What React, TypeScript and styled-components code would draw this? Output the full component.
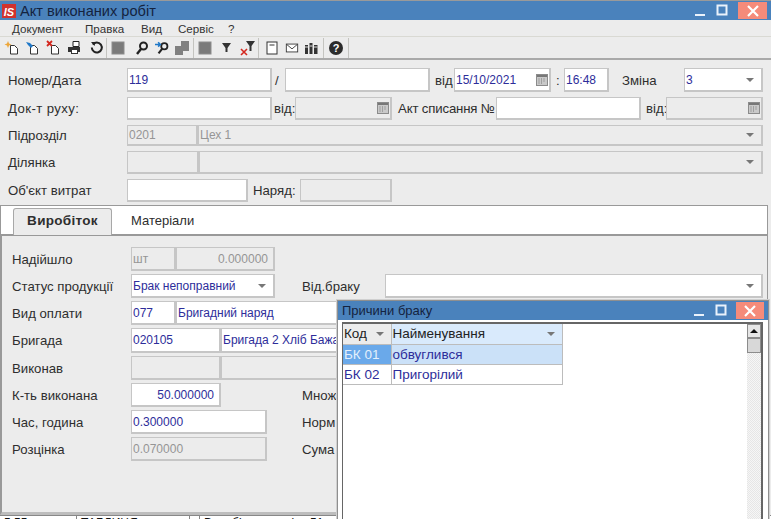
import React from "react";
import styled, { createGlobalStyle } from "styled-components";

const Global = createGlobalStyle`
  html, body { margin: 0; padding: 0; width: 771px; height: 519px; overflow: hidden; background: #ececec; }
  #root { width: 771px; height: 519px; overflow: hidden; }
  * { box-sizing: border-box; }
`;

const Page = styled.div`
  position: relative;
  width: 771px;
  height: 519px;
  overflow: hidden;
  background: #ececec;
  color: #2e2e2e;
  font: 13.2px "Liberation Sans", Arial, sans-serif;
  border-top: 1px solid #9a9a9a;
`;
const TitleBar = styled.div<{ $size: number }>`
  height: 19px;
  background: #4a82bc;
  display: flex;
  align-items: center;
  padding-left: 1px;
  color: #14233f;
  font-size: ${(p) => p.$size}px;
  gap: 3px;
`;
const WinButtons = styled.div`
  margin-left: auto;
  display: flex;
  align-items: flex-start;
  align-self: flex-start;
  height: 17px;
  padding-right: 4px;
`;
const WinBtn = styled.div<{ $w: number }>`
  width: ${(p) => p.$w}px;
  height: 17px;
  display: flex;
  align-items: center;
  justify-content: center;
`;
const CloseBtn = styled(WinBtn)`
  background: #f58b7a;
  margin-top: 1px;
  margin-left: 5px;
`;
const MenuBar = styled.div`
  height: 17px;
  display: flex;
  align-items: center;
  padding-left: 12px;
  border-bottom: 1px solid #d9d9d3;
  font-size: 11.6px;
  color: #333;
`;
const MenuItem = styled.span<{ $w: number }>`
  width: ${(p) => p.$w}px;
  flex: none;
`;
const Toolbar = styled.div`
  height: 23px;
  display: flex;
  align-items: center;
  padding-left: 2px;
  border-bottom: 2px solid #a9a9a9;
`;
const Tool = styled.div<{ $w: number }>`
  width: ${(p) => p.$w}px;
  height: 20px;
  flex: none;
  display: flex;
  align-items: center;
  justify-content: center;
`;
const Sep = styled.div`
  width: 1px;
  height: 20px;
  flex: none;
  background: #c4c4c0;
`;

const Form = styled.div`
  padding: 8px 8px 0 8px;
  display: flex;
  flex-direction: column;
  gap: 5px;
`;
const Row = styled.div<{ $h?: number }>`
  height: ${(p) => p.$h ?? 23}px;
  display: flex;
  align-items: stretch;
`;
const Label = styled.div<{ $w: number; $pl?: number; $ls?: number }>`
  width: ${(p) => p.$w}px;
  flex: none;
  display: flex;
  align-items: center;
  padding-left: ${(p) => p.$pl ?? 0}px;
  letter-spacing: ${(p) => p.$ls ?? 0}px;
  white-space: nowrap;
`;
const Field = styled.div<{ $w: number; $off?: boolean; $right?: boolean }>`
  width: ${(p) => p.$w}px;
  flex: none;
  display: flex;
  align-items: center;
  justify-content: ${(p) => (p.$right ? "flex-end" : "space-between")};
  padding: 0 ${(p) => (p.$right ? 5 : 1)}px 0 1px;
  border: 1px solid #c6c6c6;
  border-width: 1px 2px 2px 1px;
  background: ${(p) => (p.$off ? "#ececec" : "#fff")};
  color: ${(p) => (p.$off ? "#959595" : "#2d2d9a")};
  white-space: nowrap;
  overflow: hidden;
  font-size: 12px;
`;
const Arrow = styled.i`
  width: 0;
  height: 0;
  margin-right: 6px;
  flex: none;
  border-left: 4px solid transparent;
  border-right: 4px solid transparent;
  border-top: 4px solid #777;
`;

const TabStrip = styled.div`
  height: 31px;
  margin-top: 3px;
  margin-right: 3px;
  background: #fff;
  border: 1px solid #999;
  border-width: 1px 1px 2px 1px;
  display: flex;
  align-items: flex-end;
  padding-left: 12px;
`;
const ActiveTab = styled.div`
  width: 99px;
  height: 27px;
  margin-bottom: -1px;
  padding-bottom: 3px;
  background: #ececec;
  border: 1px solid #a8a8a8;
  border-bottom: none;
  border-radius: 3px 3px 0 0;
  display: flex;
  align-items: center;
  justify-content: center;
  font-weight: bold;
  font-size: 13.5px;
  letter-spacing: 0.3px;
`;
const Tab = styled.div`
  padding: 0 0 0 19px;
  height: 27px;
  display: flex;
  align-items: center;
  font-size: 13px;
`;
const TabBody = styled.div`
  height: 279px;
  margin-right: 3px;
  border: 1px solid #999;
  border-width: 0 1px 3px 2px;
  border-bottom-color: #bdbdbd;
  padding: 11px 0 0 10px;
  display: flex;
  flex-direction: column;
  gap: 3px;
`;
const StatusBar = styled.div`
  height: 14px;
  display: flex;
  background: #fff;
  color: #111;
  font-size: 12px;
  line-height: 14px;
  border-top: 1px solid #888;
  overflow: hidden;
`;
const StatusCell = styled.div<{ $w: number }>`
  width: ${(p) => p.$w}px;
  flex: none;
  padding-left: 4px;
  border-right: 1px solid #888;
  white-space: nowrap;
`;

const Dialog = styled.div`
  position: absolute;
  left: 337px;
  top: 299px;
  width: 432px;
  height: 225px;
  background: #fff;
  border: 1px solid #8f8f8f;
  border-width: 1px 1px 0 1px;
  box-shadow: 0 0 0 1px #d0d0d0;
`;
const DialogTitle = styled.span`
  padding-left: 3px;
`;
const DialogBody = styled.div`
  height: 205px;
  margin: 2px 5px 0 4px;
  border: 2px solid #666;
  border-width: 2px 2px 0 1px;
  display: flex;
  justify-content: space-between;
`;
const Table = styled.table`
  border-collapse: collapse;
  table-layout: fixed;
  width: 219px;
  align-self: flex-start;
  font-size: 13.5px;
  color: #2d2d9a;
`;
const Th = styled.th<{ $w: number; $accent?: boolean }>`
  width: ${(p) => p.$w}px;
  height: 20px;
  padding: 0 1px;
  font-weight: normal;
  text-align: left;
  color: #222;
  background: ${(p) => (p.$accent ? "#d9eafc" : "#ececec")};
  border: 1px solid #bcbcbc;
  border-top: none;
  border-left: none;
`;
const ThInner = styled.div`
  display: flex;
  align-items: center;
  justify-content: space-between;
`;
const Td = styled.td<{ $bg: string; $light?: boolean }>`
  height: 20px;
  padding: 0 1px;
  background: ${(p) => p.$bg};
  color: ${(p) => (p.$light ? "#e4f0fc" : "#2d2d9a")};
  border: 1px solid #bcbcbc;
  border-left: none;
`;
const Scroll = styled.div`
  width: 14px;
  background: repeating-conic-gradient(#e6e6e6 0 25%, #f6f6f6 0 50%) 0 0 / 2px 2px;
  display: flex;
  flex-direction: column;
`;
const ScrollBtn = styled.div`
  height: 14px;
  background: #e6e6e6;
  border: 1px solid #8c8c8c;
  display: flex;
  align-items: center;
  justify-content: center;
`;
const ScrollUp = styled.i`
  width: 0;
  height: 0;
  border-left: 4px solid transparent;
  border-right: 4px solid transparent;
  border-bottom: 4px solid #111;
`;
const ScrollThumb = styled.div`
  height: 15px;
  background: #d8d8d8;
  border: 1px solid #8c8c8c;
`;

const Logo = () => (
  <svg width="16" height="16" viewBox="0 0 16 16">
    <rect x="1" y="1" width="14" height="14" fill="#d2322d" />
    <text x="8" y="12.5" textAnchor="middle" fontSize="11" fontWeight="bold" fontStyle="italic" fontFamily="Liberation Sans" fill="#fff">IS</text>
  </svg>
);
const Min = () => (
  <svg width="14" height="14" viewBox="0 0 14 14"><rect x="2" y="11" width="10" height="2" fill="#eaf2fb" /></svg>
);
const Max = () => (
  <svg width="12" height="12" viewBox="0 0 12 12"><rect x="1.500" y="1.500" width="9" height="9" fill="none" stroke="#eaf2fb" strokeWidth="2" /></svg>
);
const Close = () => (
  <svg width="14" height="14" viewBox="0 0 14 14"><path d="M2 2l10 10M12 2L2 12" stroke="#fff" strokeWidth="2.200" /></svg>
);
const Cal = () => (
  <svg width="12" height="12" viewBox="0 0 12 12">
    <rect x=".5" y=".5" width="11" height="11" fill="#c9c9c9" stroke="#8b8b8b" />
    <rect x="1" y="1" width="10" height="2" fill="#777" />
    <path d="M2.500 5h1M5 5h1M7.500 5h1M2.500 7h1M5 7h1M7.500 7h1M2.500 9h1M5 9h1" stroke="#777" />
  </svg>
);

const Doc = ({ accent }: { accent: React.ReactNode }) => (
  <svg width="16" height="16" viewBox="0 0 16 16">
    <path d="M6.500 5.500h4l3 3v5.500h-7z" fill="#fff" stroke="#333" />
    {accent}
  </svg>
);
const Square = () => (
  <svg width="14" height="14" viewBox="0 0 14 14"><rect x="1" y="1" width="12" height="12" fill="#7a7a7a" stroke="#8c8c8c" /></svg>
);
const Lens = ({ accent }: { accent?: React.ReactNode }) => (
  <svg width="18" height="16" viewBox="0 0 18 16">
    <circle cx="10.500" cy="6" r="3.500" fill="none" stroke="#222" strokeWidth="2" />
    <path d="M8 9l-4 5" stroke="#222" strokeWidth="2.400" />
    {accent}
  </svg>
);
const Funnel = ({ x }: { x?: boolean }) => (
  <svg width="18" height="18" viewBox="0 0 18 18">
    <path d={x ? "M7 2h9l-3.500 5v5h-2V7z" : "M4 4h9l-3.500 5v4h-2V9z"} fill="#333" />
    {x && <path d="M2 10l6 6M8 10l-6 6" stroke="#d4281f" strokeWidth="1.600" />}
  </svg>
);

const toolbar: React.ReactNode[] = [
  <Tool $w={20} key="a"><Doc accent={<path d="M4 1l1 2.500 2.500 1-2.500 1-1 2.500-1-2.500-2.500-1 2.500-1z" fill="#eda63a" />} /></Tool>,
  <Tool $w={20} key="b"><Doc accent={<path d="M2 2l4 1 3 3-2 2-3-3z" fill="#1f78c8" />} /></Tool>,
  <Tool $w={21} key="c"><Doc accent={<path d="M2 1l5 5M7 1L2 6" stroke="#d4281f" strokeWidth="1.800" />} /></Tool>,
  <Tool $w={23} key="d">
    <svg width="16" height="16" viewBox="0 0 16 16">
      <path d="M6 1.500h6v5h-6z" fill="#fff" stroke="#222" />
      <path d="M1 7h12v5h-2v2H4v-2H1z" fill="#333" />
      <rect x="5" y="10" width="5" height="3" fill="#fff" />
    </svg>
  </Tool>,
  <Tool $w={20} key="e">
    <svg width="15" height="15" viewBox="0 0 15 15">
      <path d="M3.800 4.500a5 5 0 1 1-1 3" fill="none" stroke="#222" strokeWidth="2" />
      <path d="M2 2l4.500 0 -1 4z" fill="#222" />
    </svg>
  </Tool>,
  <Sep key="s1" />,
  <Tool $w={22} key="f"><Square /></Tool>,
  <Tool $w={26} key="g"><Lens /></Tool>,
  <Tool $w={16} key="h"><Lens accent={<path d="M0 4h5M3.500 1.500L6 4 3.500 6.500" fill="none" stroke="#1f78c8" strokeWidth="1.800" />} /></Tool>,
  <Tool $w={22} key="i">
    <svg width="16" height="16" viewBox="0 0 16 16"><path d="M7 1h8v10H9v4H1V6h6z" fill="#808080" /></svg>
  </Tool>,
  <Sep key="s2" />,
  <Tool $w={22} key="j"><Square /></Tool>,
  <Tool $w={22} key="k"><Funnel /></Tool>,
  <Tool $w={20} key="l"><Funnel x /></Tool>,
  <Sep key="s3" />,
  <Tool $w={26} key="m">
    <svg width="14" height="14" viewBox="0 0 14 14">
      <rect x="2" y="1" width="10" height="12" fill="#fff" stroke="#333" />
      <path d="M4.500 4h5" stroke="#333" />
    </svg>
  </Tool>,
  <Tool $w={14} key="n">
    <svg width="16" height="14" viewBox="0 0 16 14">
      <rect x="1.500" y="2.500" width="13" height="9" fill="#fff" stroke="#333" />
      <path d="M2 3l6 5 6-5" fill="none" stroke="#333" />
    </svg>
  </Tool>,
  <Tool $w={24} key="o">
    <svg width="15" height="14" viewBox="0 0 15 14">
      <path d="M1 4h3v9H1zM5.500 2h3v11h-3zM10 4h3.500v9H10z" fill="#333" />
      <path d="M1 6h3M5.500 5h3M10 6h3.500" stroke="#ddd" />
    </svg>
  </Tool>,
  <Sep key="s4" />,
  <Tool $w={24} key="p">
    <svg width="16" height="16" viewBox="0 0 16 16">
      <circle cx="8" cy="8" r="7" fill="#2c2c2c" />
      <text x="8" y="12" textAnchor="middle" fontSize="11" fontWeight="bold" fontFamily="Liberation Sans" fill="#fff">?</text>
    </svg>
  </Tool>,
  <Sep key="s5" />,
];

export default function App() {
  return (
    <Page>
      <Global />
      <TitleBar $size={14.6}>
        <Logo />
        <span>Акт виконаних робіт</span>
        <WinButtons>
          <WinBtn $w={22}><Min /></WinBtn>
          <WinBtn $w={22}><Max /></WinBtn>
          <CloseBtn $w={29}><Close /></CloseBtn>
        </WinButtons>
      </TitleBar>
      <MenuBar>
        <MenuItem $w={73}>Документ</MenuItem>
        <MenuItem $w={56}>Правка</MenuItem>
        <MenuItem $w={37}>Вид</MenuItem>
        <MenuItem $w={50}>Сервіс</MenuItem>
        <MenuItem $w={14}>?</MenuItem>
      </MenuBar>
      <Toolbar>{toolbar}</Toolbar>

      <Form>
        <Row $h={24}>
          <Label $w={119}>Номер/Дата</Label>
          <Field $w={145}>119</Field>
          <Label $w={13} $pl={3}>/</Label>
          <Field $w={145} />
          <Label $w={24} $pl={5}>від</Label>
          <Field $w={97}>15/10/2021<Cal /></Field>
          <Label $w={13} $pl={5}>:</Label>
          <Field $w={45}>16:48</Field>
          <Label $w={75} $pl={13}>Зміна</Label>
          <Field $w={79}>3<Arrow /></Field>
        </Row>
        <Row>
          <Label $w={119} $ls={0.4}>Док-т руху:</Label>
          <Field $w={145} />
          <Label $w={23} $pl={2}>від:</Label>
          <Field $w={97} $off><span /><Cal /></Field>
          <Label $w={104} $pl={6} $ls={-0.15}>Акт списання №</Label>
          <Field $w={145} />
          <Label $w={25} $pl={5}>від:</Label>
          <Field $w={97} $off><span /><Cal /></Field>
        </Row>
        <Row $h={21}>
          <Label $w={119}>Підрозділ</Label>
          <Field $w={71} $off>0201</Field>
          <Field $w={565} $off>Цех 1<Arrow /></Field>
        </Row>
        <Row>
          <Label $w={119}>Ділянка</Label>
          <Field $w={72} $off />
          <Field $w={564} $off><span /><Arrow /></Field>
        </Row>
        <Row>
          <Label $w={119}>Об'єкт витрат</Label>
          <Field $w={121} />
          <Label $w={52} $pl={5}>Наряд:</Label>
          <Field $w={92} $off />
        </Row>
      </Form>

      <TabStrip>
        <ActiveTab>Виробіток</ActiveTab>
        <Tab>Матеріали</Tab>
      </TabStrip>
      <TabBody>
        <Row $h={24}>
          <Label $w={119}>Надійшло</Label>
          <Field $w={45} $off>шт</Field>
          <Field $w={99} $off $right>0.000000</Field>
        </Row>
        <Row $h={24}>
          <Label $w={119}>Статус продукції</Label>
          <Field $w={144}>Брак непоправний<Arrow /></Field>
          <Label $w={110} $pl={27}>Від.браку</Label>
          <Field $w={378}><span /><Arrow /></Field>
        </Row>
        <Row $h={24}>
          <Label $w={119}>Вид оплати</Label>
          <Field $w={45}>077</Field>
          <Field $w={170}>Бригадний наряд</Field>
        </Row>
        <Row $h={25}>
          <Label $w={119}>Бригада</Label>
          <Field $w={90}>020105</Field>
          <Field $w={125}>Бригада 2 Хліб Бажа</Field>
        </Row>
        <Row $h={24}>
          <Label $w={119}>Виконав</Label>
          <Field $w={90} $off />
          <Field $w={125} $off />
        </Row>
        <Row $h={24}>
          <Label $w={119}>К-ть виконана</Label>
          <Field $w={90} $right>50.000000</Field>
          <Label $w={116} $pl={81}>Множ</Label>
        </Row>
        <Row $h={24}>
          <Label $w={119}>Час, година</Label>
          <Field $w={136}>0.300000</Field>
          <Label $w={70} $pl={35}>Норм</Label>
        </Row>
        <Row $h={24}>
          <Label $w={119}>Розцінка</Label>
          <Field $w={136} $off>0.070000</Field>
          <Label $w={70} $pl={35}>Сума</Label>
        </Row>
      </TabBody>
      <StatusBar>
        <StatusCell $w={77}>5 55</StatusCell>
        <StatusCell $w={113}>ТАБЛИЦЯ</StatusCell>
        <StatusCell $w={10} />
        <StatusCell $w={137}>Виробіток за зміну 51</StatusCell>
      </StatusBar>

      <Dialog>
        <TitleBar $size={13}>
          <DialogTitle>Причини браку</DialogTitle>
          <WinButtons>
            <WinBtn $w={22}><Min /></WinBtn>
            <WinBtn $w={21}><Max /></WinBtn>
            <CloseBtn $w={28}><Close /></CloseBtn>
          </WinButtons>
        </TitleBar>
        <DialogBody>
          <Table>
            <thead>
              <tr>
                <Th $w={48}><ThInner>Код<Arrow /></ThInner></Th>
                <Th $w={171} $accent><ThInner>Найменування<Arrow /></ThInner></Th>
              </tr>
            </thead>
            <tbody>
              <tr>
                <Td $bg="#6aa9ea" $light>БК 01</Td>
                <Td $bg="#cbe1f8">обвуглився</Td>
              </tr>
              <tr>
                <Td $bg="#fff">БК 02</Td>
                <Td $bg="#fff">Пригорілий</Td>
              </tr>
            </tbody>
          </Table>
          <Scroll>
            <ScrollBtn><ScrollUp /></ScrollBtn>
            <ScrollThumb />
          </Scroll>
        </DialogBody>
      </Dialog>
    </Page>
  );
}
